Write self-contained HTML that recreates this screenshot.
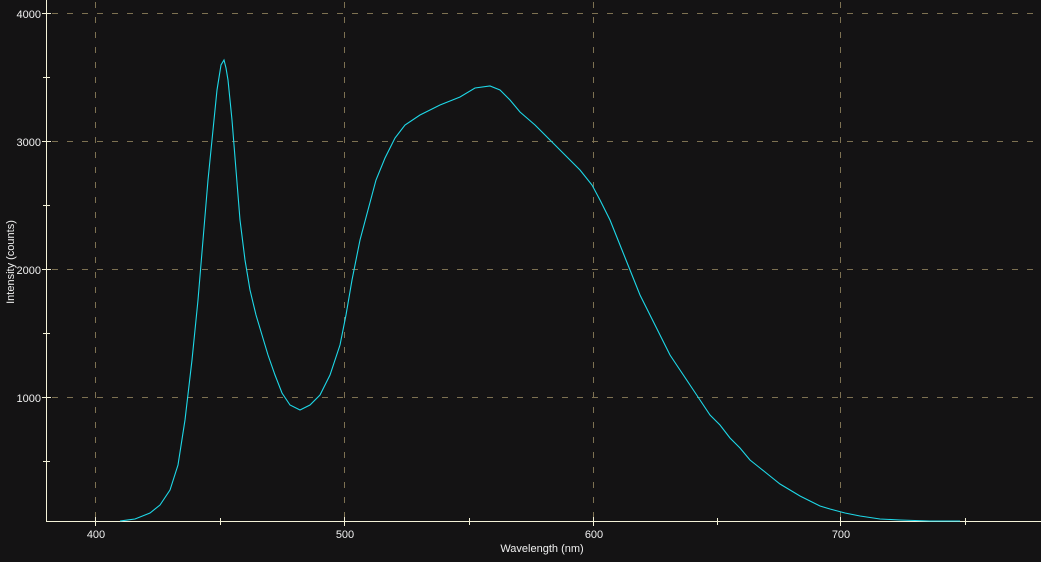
<!DOCTYPE html>
<html><head><style>
html,body{margin:0;padding:0;background:#141314;}
svg{display:block;font-family:"Liberation Sans",sans-serif;}
</style></head><body>
<svg width="1041" height="562" viewBox="0 0 1041 562">
<rect width="1041" height="562" fill="#141314"/>
<g stroke="#7d7152" stroke-width="1" stroke-dasharray="6,9" fill="none">
<line x1="95.5" y1="2" x2="95.5" y2="521"/>
<line x1="344.5" y1="2" x2="344.5" y2="521"/>
<line x1="593.5" y1="2" x2="593.5" y2="521"/>
<line x1="840.5" y1="2" x2="840.5" y2="521"/>
<line x1="52" y1="13.5" x2="1041" y2="13.5"/>
<line x1="52" y1="141.5" x2="1041" y2="141.5"/>
<line x1="52" y1="269.5" x2="1041" y2="269.5"/>
<line x1="52" y1="397.5" x2="1041" y2="397.5"/>
</g>
<g stroke="#f4f2d8" stroke-width="1" fill="none">
<line x1="46.5" y1="0" x2="46.5" y2="522"/>
<line x1="46" y1="521.5" x2="1041" y2="521.5"/>
<line x1="42" y1="13.5" x2="51" y2="13.5"/>
<line x1="43" y1="77.5" x2="50" y2="77.5"/>
<line x1="42" y1="141.5" x2="51" y2="141.5"/>
<line x1="43" y1="205.5" x2="50" y2="205.5"/>
<line x1="42" y1="269.5" x2="51" y2="269.5"/>
<line x1="43" y1="333.5" x2="50" y2="333.5"/>
<line x1="42" y1="397.5" x2="51" y2="397.5"/>
<line x1="43" y1="461.5" x2="50" y2="461.5"/>
<line x1="95.5" y1="517" x2="95.5" y2="526"/>
<line x1="220.5" y1="518" x2="220.5" y2="525"/>
<line x1="344.5" y1="517" x2="344.5" y2="526"/>
<line x1="469.5" y1="518" x2="469.5" y2="525"/>
<line x1="593.5" y1="517" x2="593.5" y2="526"/>
<line x1="717.5" y1="518" x2="717.5" y2="525"/>
<line x1="840.5" y1="517" x2="840.5" y2="526"/>
<line x1="965.5" y1="518" x2="965.5" y2="525"/>
</g>
<g fill="#f0f0f0" font-size="11" text-anchor="end">
<text x="41" y="18">4000</text>
<text x="41" y="146">3000</text>
<text x="41" y="274">2000</text>
<text x="41" y="402">1000</text>
</g>
<g fill="#f0f0f0" font-size="11" text-anchor="middle">
<text x="96" y="538">400</text>
<text x="345" y="538">500</text>
<text x="594" y="538">600</text>
<text x="841" y="538">700</text>
<text x="542" y="552">Wavelength (nm)</text>
<text transform="translate(14,262) rotate(-90)">Intensity (counts)</text>
</g>
<polyline fill="none" stroke="#1ed8e8" stroke-width="1.1" points="120,521 135,519 150,513 160,505 170,490 178,465 185,420 192,360 198,300 203,240 208,180 213,130 217,90 221,65 224,60 226,68 228,80 232,120 236,170 240,220 245,260 250,290 256,315 262,335 268,355 275,375 282,393 290,405 300,410 310,405 320,395 330,375 340,345 346,315 352,280 360,240 368,210 376,180 385,158 395,138 405,125 420,115 440,105 460,97 475,88 490,86 500,90 510,100 520,112 535,125 550,140 565,155 580,170 592,185 600,200 610,220 620,245 630,270 640,295 650,315 660,335 670,355 680,370 690,385 700,400 710,415 720,425 730,438 740,448 750,460 760,468 770,476 780,484 790,490 800,496 810,501 820,506 830,509 845,513 860,516 880,519 900,520 930,521 960,521"/>
</svg>
</body></html>
